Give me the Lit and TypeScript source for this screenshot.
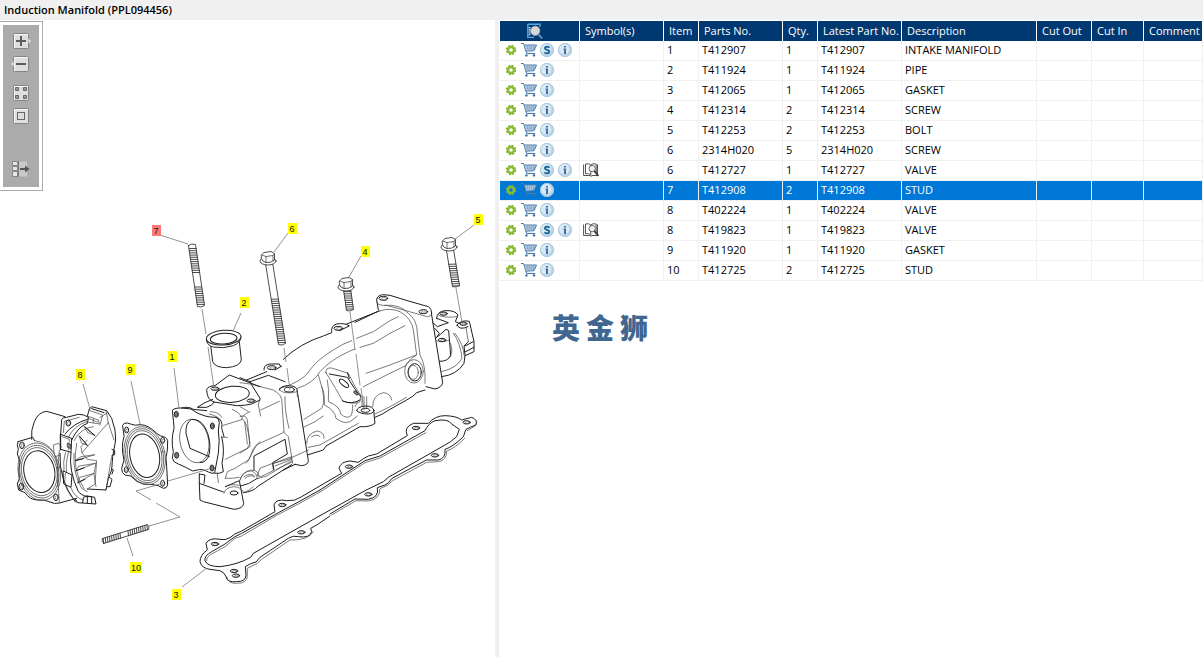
import { LitElement, html, css, svg, nothing } from "lit";
import { customElement, property, state } from "lit/decorators.js";
import { classMap } from "lit/directives/class-map.js";

interface Part {
  item: string;
  no: string;
  qty: number;
  desc: string;
  service?: boolean;
  symbol?: boolean;
}

const PARTS: Part[] = [
  { item: "1", no: "T412907", qty: 1, desc: "INTAKE MANIFOLD", service: true },
  { item: "2", no: "T411924", qty: 1, desc: "PIPE" },
  { item: "3", no: "T412065", qty: 1, desc: "GASKET" },
  { item: "4", no: "T412314", qty: 2, desc: "SCREW" },
  { item: "5", no: "T412253", qty: 2, desc: "BOLT" },
  { item: "6", no: "2314H020", qty: 5, desc: "SCREW" },
  { item: "6", no: "T412727", qty: 1, desc: "VALVE", service: true, symbol: true },
  { item: "7", no: "T412908", qty: 2, desc: "STUD" },
  { item: "8", no: "T402224", qty: 1, desc: "VALVE" },
  { item: "8", no: "T419823", qty: 1, desc: "VALVE", service: true, symbol: true },
  { item: "9", no: "T411920", qty: 1, desc: "GASKET" },
  { item: "10", no: "T412725", qty: 2, desc: "STUD" },
];

const gear = html`<svg viewBox="0 0 16 16" width="16" height="16">
  <circle cx="8" cy="8" r="4.2" fill="none" stroke="#7fb131" stroke-width="2" stroke-dasharray="1.9 1.4" />
  <circle cx="8" cy="8" r="3" fill="none" stroke="#8abb33" stroke-width="2.4" />
</svg>`;

const cart = html`<svg viewBox="0 0 16 16" width="16" height="16" fill="none">
  <path d="M3.6 3H15.4L12.8 8.6L5.4 9Z" fill="#c9dbec" />
  <path d="M6.3 3.5L7 8.5M8.6 3.5V8.5M10.9 3.5L10.6 8.5M13 3.5L12 8.5M4.2 5H14.6M4.8 6.8H13.8" stroke="#6f98c2" stroke-width="0.6" />
  <path d="M0 1.5H2.6L5.6 11.5M3.4 3H15.6L13 8.7L5 9.2" stroke="#4b7cab" />
  <path d="M5.6 11.5H14.2" stroke="#4b7cab" stroke-width="1.2" />
  <circle cx="5.4" cy="13.4" r="1.2" fill="#3f70a2" /><circle cx="13" cy="13.4" r="1.2" fill="#3f70a2" />
</svg>`;

const disc = svg`<circle cx="8" cy="8" r="7" fill="#b9d3e6" /><circle cx="7.2" cy="7" r="5.2" fill="#d9e8f3" />
  <circle cx="8" cy="8" r="6.6" fill="none" stroke="#a9c7de" stroke-width="0.8" />`;

const service = html`<svg viewBox="0 0 16 16" width="16" height="16">${disc}
  <path d="M10.6 5.6Q9.4 4.7 8 4.7Q5.8 4.8 5.9 6.2Q6 7.4 8 7.9Q10.3 8.5 10.2 9.8Q10 11.3 8 11.3Q6.4 11.3 5.4 10.4" fill="none" stroke="#0f6695" stroke-width="1.8" />
</svg>`;

const info = html`<svg viewBox="0 0 16 16" width="16" height="16">${disc}
  <path d="M7 4H9V5.6H7ZM6.4 6.6H9V12H7V7.6H6.4Z" fill="#3e6fa6" />
</svg>`;

const book = html`<svg viewBox="0 0 16 16" width="16" height="16" fill="none" stroke="#56524c">
  <path d="M0.6 2.5V13.5H7L8 14.4L9 13.5H14.5V2.5M2.5 2V11.8Q6 10.8 7.8 13V3Q5.6 1 2.5 2ZM7.8 3Q9.6 1 13.2 2V11" />
  <circle cx="9.2" cy="6.6" r="3.2" fill="#eeeeec" stroke="#666" /><path d="M11.4 9L15.4 14" stroke="#3f3b37" stroke-width="2" />
</svg>`;

const searchDoc = html`<svg viewBox="0 0 16 16" width="16" height="16" fill="none">
  <path d="M0.8 1.2H13V4M0.8 1V14.4H7" stroke="#5aa7de" stroke-width="1.4" />
  <path d="M2.6 4V13" stroke="#fff" stroke-width="1.6" stroke-dasharray="1.2 1" />
  <circle cx="8.2" cy="7.8" r="4.6" fill="#d6d9da" stroke="#a7adb2" /><path d="M11.4 11.4L15.2 15.4" stroke="#5289b8" stroke-width="2.2" />
</svg>`;

const plate = svg`<rect x="1.5" y="1.5" width="15" height="15" rx="1" fill="#dedede" stroke="#858585" />
  <path d="M2.5 16V2.5H16" fill="none" stroke="#f7f7f7" />`;

const TOOLS = [
  { label: "Zoom in", gap: "", art: svg`${plate}<path d="M16.5 6.5L19 9L16.5 11.5Z" fill="#e8e8e8" /><path d="M4 9H14M9 4V14" stroke="#5c5c5c" stroke-width="2" />` },
  { label: "Zoom out", gap: "", art: svg`${plate}<path d="M1.5 6.5L-1 9L1.5 11.5Z" fill="#e8e8e8" /><path d="M4 9H14" stroke="#5c5c5c" stroke-width="2" />` },
  { label: "Tile", gap: "gap-s", art: svg`${plate}<path d="M3.5 3.5h3v3h-3zM11.5 3.5h3v3h-3zM3.5 11.5h3v3h-3zM11.5 11.5h3v3h-3z" fill="#999" stroke="#666" />` },
  { label: "Fit", gap: "", art: svg`${plate}<rect x="5.5" y="5.5" width="7" height="7" fill="#ddd" stroke="#666" />` },
  { label: "Toggle list", gap: "gap-l", art: svg`<path d="M6 1.5H15V16.5H6Z" fill="#c9c9c9" /><path d="M0.5 1.5h5v4h-5zM0.5 6.5h5v4h-5zM0.5 11.5h5v5h-5z" fill="#e6e6e6" stroke="#858585" /><path d="M6.5 1V17" stroke="#777" /><path d="M8 9H14" stroke="#555" stroke-width="2" /><path d="M13 5.5L17.5 9L13 12.5Z" fill="#555" />` },
];

const CALLOUTS = [
  { n: "1", x: 172, y: 357 },
  { n: "2", x: 244, y: 303 },
  { n: "3", x: 176, y: 595 },
  { n: "4", x: 365, y: 252 },
  { n: "5", x: 478, y: 220 },
  { n: "6", x: 292, y: 229 },
  { n: "7", x: 156, y: 231 },
  { n: "8", x: 80, y: 375 },
  { n: "9", x: 130, y: 370 },
  { n: "10", x: 136, y: 568 },
];

const LEADERS =
  "M160 235L188 244M241 313L233 331M182 587L207 568M361 256L349 277M474 225L455 239M288 233L274 252M83 384L90 409M174 368L179 408M131 381L140 424M133 556L127 538" +
  "M202 309L206 334M208 347L214 388M284 348L286 362M287 368L290 390M350 312L355 350M356 354L360 385M361 388L364 410M456 288L462 322" +
  "M209 469L168 481M160 484L136 491L151 500M156 503L180 517L149 526";

/* Shank between two points; each pair in `bands` is a threaded stretch, as fractions of its length. */
function shank(x1: number, y1: number, x2: number, y2: number, w: number, bands: number[][]) {
  const len = Math.hypot(x2 - x1, y2 - y1);
  const ux = (x2 - x1) / len, uy = (y2 - y1) / len;
  const nx = (-uy * w) / 2, ny = (ux * w) / 2;
  const f = (v: number) => v.toFixed(1);
  let hatch = "";
  for (const [a, b] of bands) {
    for (let t = a * len; t < b * len; t += 2.2) {
      const cx = x1 + ux * t, cy = y1 + uy * t;
      hatch += `M${f(cx + nx)} ${f(cy + ny)}L${f(cx - nx + ux)} ${f(cy - ny + uy)}`;
    }
  }
  return svg`<path class="solid" d="M${f(x1 + nx)} ${f(y1 + ny)}L${f(x2 + nx)} ${f(y2 + ny)}Q${f(x2 + ux * 2)} ${f(y2 + uy * 2)} ${f(x2 - nx)} ${f(y2 - ny)}L${f(x1 - nx)} ${f(y1 - ny)}Q${f(x1 - ux * 2)} ${f(y1 - uy * 2)} ${f(x1 + nx)} ${f(y1 + ny)}Z" />
    <path class="hatch" d=${hatch} />`;
}

function head(x: number, y: number) {
  return svg`<g transform="translate(${x} ${y})">
    <ellipse class="solid" cx="0" cy="3" rx="8" ry="4" />
    <path class="solid" d="M-6.5 -3L-4 -5.5L3 -6.5L6.5 -4.5L6.5 2Q3 5 -2 4.5Q-6 3.5 -6.5 1Z" />
    <path d="M-6.5 -3L-2 -1.5L5 -2.5L6.5 -4.5M-2 -1.5V4.5M5 -2.5V3" /></g>`;
}

function holes(list: number[][], rx: number, ry: number, cls = "") {
  return list.map(([x, y]) => svg`<ellipse class="bold ${cls}" cx=${x} cy=${y} rx=${rx} ry=${ry} /><ellipse class="fine" cx=${x + 2} cy=${y + 1} rx=${rx * 0.6} ry=${ry * 0.6} />`);
}

const throttle = svg`<g transform="translate(0 390) scale(.33333)">
  <path class="bold" d="M95 148Q92 120 103 95Q115 66 140 64L195 80M54 155L98 142L104 152M54 155Q49 162 55 178L52 192L60 215Q54 240 58 265L52 282L56 300L75 308Q88 328 110 330Q135 328 150 336Q162 343 178 339L230 325" />
  <g transform="rotate(-12 118 245)"><ellipse class="bold" cx="118" cy="245" rx="46" ry="63" /><ellipse cx="118" cy="245" rx="53" ry="73" /><ellipse cx="118" cy="245" rx="58" ry="80" /><ellipse cx="118" cy="245" rx="63" ry="87" /></g>
  ${holes([[66, 166], [64, 290], [168, 322]], 7, 10)}
  <path d="M104 152Q140 155 162 188L160 165L175 160L185 172M165 200L178 196M162 188Q180 230 172 290" />
  <path class="bold" d="M182 133L185 88Q188 82 200 82L235 73Q250 72 266 82L262 98M182 133V180" />
  <path d="M190 128L193 94L238 82M178 180L172 245L178 339" />
  ${holes([[205, 99]], 7, 9)}
  <path class="bold" d="M268 58L275 50L320 62L335 85L345 120L347 150L338 200L335 240L325 265L318 300L262 297M268 58L262 78M275 56L312 68" />
  <path d="M262 78L295 90L298 102L262 96M262 84L292 96M300 82L323 68M270 62L308 75L300 105M280 86V98" />
  <path class="bold" d="M226 336Q176 270 180 190M182 133L215 145L213 187L182 178ZM190 243L216 255L213 292L192 282Z" />
  <path class="bold" d="M195 132Q220 100 262 88M215 150Q235 108 262 100M213 187Q205 240 235 305Q250 322 275 320" />
  <path d="M205 142Q222 106 262 94M205 188Q196 225 200 245M212 292Q225 325 250 330M222 152Q242 114 280 110M222 190Q218 250 245 295L262 305M230 160Q214 240 252 296M196 188Q188 215 192 243M195 284Q208 318 230 336M186 140L208 148L206 180M196 250L194 280" />
  <path class="bold" d="M225 325L232 338L288 342L284 322L262 318L250 322L248 338M262 318V338M275 322V340" />
  <path d="M252 108L285 137L264 128ZM238 138L262 166L246 160ZM226 212L285 194L244 200ZM228 242L286 220L238 228ZM234 278L282 250L240 262Z" />
  <path class="bold" d="M256 112L285 137M240 140L262 166M226 212L250 206M228 242L252 234M234 278L255 268" />
  <path d="M325 98L246 188L262 208L290 212L285 282L262 297M325 98L342 150M246 188L243 170L262 150M318 300L335 200M318 62L325 98M288 218L282 252L288 290" />
  <path class="bold" d="M336 178L344 182V194L336 196M334 236L340 240L336 252M328 262L336 268L330 290L322 290" />
  <path class="dark" d="M203 160L213 164V176L203 172Z" />
</g>`;

const flanges = svg`<g transform="translate(110 340) scale(.33333)">
  <path class="bold" d="M38 255Q40 248 52 249L65 253Q75 258 90 254Q115 254 140 280L152 288Q170 290 173 302L172 330Q165 350 170 380L173 435Q170 446 160 445L145 437Q125 432 100 432Q80 428 62 408L45 405Q34 400 35 385L42 360Q32 320 42 290Z" />
  <g transform="rotate(-12 104 347)"><ellipse class="bold" cx="104" cy="347" rx="44" ry="66" /><ellipse cx="104" cy="347" rx="51" ry="76" /><ellipse cx="104" cy="347" rx="56" ry="82" /><ellipse cx="104" cy="347" rx="61" ry="88" /></g>
  ${holes([[50, 270], [158, 301], [49, 389], [158, 430]], 6, 9)}
  <path class="bold" d="M188 210Q195 203 215 204L243 207Q262 222 285 228Q300 232 318 232Q328 236 328 248L325 270Q330 300 325 340L314 398Q308 403 295 396Q275 385 262 390L248 393Q225 380 205 372Q190 368 187 355L190 335Q182 300 192 265Z" />
  <path class="bold" d="M215 204Q235 198 250 208L290 212M318 232Q341 240 335 265L342 290M335 290Q345 330 336 370L340 395Q330 402 314 400" />
  <ellipse cx="253" cy="303" rx="43" ry="66" transform="rotate(-12 253 303)" />
  <path class="bold" d="M245 238Q270 236 285 262Q305 300 298 340Q292 368 270 368M242 240Q226 250 228 280L240 325L298 350" />
  ${holes([[199, 223], [307, 258], [200, 346], [306, 384]], 6, 9, "dark")}
  <path class="bold" d="M312 186Q290 180 290 148Q295 138 315 137L358 105L450 140M308 178L285 188L262 202L290 202Q310 195 312 186L380 197Q405 197 425 192L450 180" />
  <ellipse class="bold" cx="367" cy="163" rx="51" ry="24" transform="rotate(-5 367 163)" />
  ${holes([[315, 146], [423, 182]], 12, 5)}
  <path d="M300 215Q328 215 335 232M298 222Q325 228 333 242M367 208Q385 215 395 230M420 215Q395 225 395 238M340 256L398 238Q412 245 420 310L412 325L346 358M404 245L412 312M335 292L352 292M346 415L352 395L375 385L415 360Q440 310 450 305M322 400L325 428M346 415Q366 416 388 412" />
  <path class="bold" d="M268 402V432L270 480L280 485L372 508Q400 506 401 490L388 422L346 440M268 402L285 405L282 430M268 430L340 456" />
  <path d="M342 460Q345 442 372 440Q396 442 400 458Q420 452 430 440M346 440Q360 430 388 436M388 425Q395 395 425 390Q447 392 447 408M402 410Q425 395 435 410" />
  <ellipse class="bold" cx="372" cy="459" rx="12" ry="6" />
</g>`;

const pipe = svg`<g transform="translate(180 215) scale(.33333)">
  <path class="solid bold" d="M92 390L98 440Q105 458 140 458Q180 455 184 435L178 380Z" />
  <path class="solid bold" d="M79 373Q80 392 100 396Q130 402 160 392Q183 382 183 366" />
  <ellipse class="solid bold" cx="131" cy="368" rx="52" ry="22" transform="rotate(-4 131 368)" />
  <ellipse class="bold" cx="131" cy="371" rx="40" ry="16" transform="rotate(-4 131 371)" />
</g>`;

const manifold = svg`<g transform="translate(240 290) scale(.33333)">
  <path class="bold" d="M20 270L80 245M105 240L125 228M130 208Q180 160 250 138L275 128M345 97L412 65M72 240Q70 225 90 222L118 222L122 230M275 125Q272 108 290 102Q315 98 328 108L298 122" />
  ${holes([[95, 233], [295, 115]], 13, 6)}
  <path d="M118 296Q190 275 210 240Q230 210 280 180Q310 160 335 152M350 145L400 125L450 92L475 80M172 295Q220 280 240 245Q270 210 330 183L345 177M360 172L400 160L450 130L495 107M378 250L450 225L528 195M370 290L450 250L495 228" />
  <path class="bold" d="M0 263L30 275L85 256L135 275M30 275L37 288L60 325" />
  <path d="M0 278L30 282L100 300Q128 315 126 340L132 425M60 325L55 345L62 378M62 360L118 334M0 350L24 364M0 380Q18 372 22 390L30 470L0 490" />
  <path class="bold" d="M118 300Q120 287 148 287Q172 288 172 305L205 512Q205 525 185 527L165 523" />
  <path d="M118 300Q135 315 172 305M135 320Q133 360 147 415M130 425L145 440L158 520M172 300L172 320M130 428L50 464L38 480Q30 510 18 520" />
  <ellipse class="bold" cx="148" cy="299" rx="15" ry="7" />
  <path class="bold" d="M42 540V498L135 448L142 492L98 518L102 540M130 540L165 523" />
  <path d="M100 520L155 500M105 528L155 508M110 538L158 515" />
  <path d="M192 388L245 355Q255 340 248 300L235 255M190 412L225 395L250 378M200 460Q200 430 232 423Q255 428 252 445M215 440Q235 430 240 440M205 472L240 465L355 400M150 505L205 480" />
  <path class="bold" d="M205 494L250 480L258 468L360 410Q390 412 405 400L401 360M405 382Q425 375 450 358L500 330Q520 320 530 308L555 300" />
  <path d="M405 372L450 350L500 322" />
  <path d="M258 248Q255 232 275 234L325 250L345 290L362 315L360 335Q340 345 308 333Q290 300 258 248ZM245 290Q255 310 253 345Q285 360 288 385Q320 410 342 386L352 378M262 270Q268 300 265 335Q300 348 302 372Q320 388 332 378Q338 370 338 345M345 350L352 338" />
  <path class="bold" d="M268 252L322 262Q345 300 362 320M322 248L328 265M308 333Q335 345 360 330" />
  <ellipse class="bold" cx="312" cy="280" rx="7" ry="17" transform="rotate(-50 312 280)" />
  <ellipse class="dark" cx="348" cy="309" rx="4" ry="8" transform="rotate(-50 348 309)" />
  <path d="M398 350Q398 315 430 308Q452 310 455 330M372 320V355M380 320V355M366 318V350" />
  <path class="bold" d="M350 362Q352 350 375 348Q400 348 402 362M350 362Q360 372 385 372Q400 370 402 362" />
  <ellipse class="bold" cx="376" cy="361" rx="13" ry="6" />
</g>`;

const rearEnd = svg`<g transform="translate(340 200) scale(.33333)">
  <path class="bold" d="M115 330L110 300Q110 287 128 284L150 286Q200 302 265 320Q275 325 275 345L308 548Q305 563 285 567L258 560M118 333L20 372" />
  <path d="M110 308Q118 318 140 316L262 350Q274 350 275 342M118 333Q150 322 180 335Q215 355 220 390L230 465Q205 480 195 500M135 316Q180 312 205 340Q232 360 232 400L240 465Q258 495 255 550" />
  ${holes([[130, 295], [250, 335]], 13, 6)}
  <ellipse cx="222" cy="514" rx="28" ry="35" /><ellipse class="bold" cx="224" cy="517" rx="20" ry="26" /><ellipse cx="220" cy="517" rx="15" ry="21" />
  <path class="bold" d="M290 355Q290 335 315 332Q345 330 354 345L346 365L362 372M290 355L325 368L292 380L278 368M350 376Q365 358 388 364L402 425V455L375 467L372 490Q350 525 305 530M284 385L298 400L290 412M290 412Q300 405 318 388L326 392L332 465Q325 485 298 484" />
  <path class="bold" d="M375 438L400 425M375 456L402 442M375 467L372 438L385 425M352 376Q358 392 384 380" />
  <path d="M290 422Q305 430 328 420M340 400Q362 430 366 475Q350 505 304 515M345 400Q372 435 372 465M378 382L385 425M295 345Q310 355 350 350M332 430Q340 450 332 470" />
  ${holes([[311, 341], [370, 371], [306, 420]], 11, 5)}
</g>`;

const lowerEdge = svg`<g transform="translate(170 400) scale(.33333)">
  <path class="bold" d="M220 278Q250 275 265 258L365 194M212 258Q235 255 262 235" />
  <path d="M210 240Q220 210 245 213Q260 220 262 235M262 225L270 205L308 190L310 212L272 230ZM310 190L365 175M262 236L290 228L365 182M225 235Q240 222 252 230" />
</g>`;

const gasketOuterA =
  "M480 240L395 290Q375 305 350 302Q318 295 312 315L315 335L215 393Q190 402 180 413Q165 422 150 418Q118 412 108 430L112 450Q90 465 90 485Q95 505 120 508L150 512Q165 518 168 530Q170 548 200 545Q228 545 228 525L226 500Q240 490 258 486L270 472L355 415Q370 405 385 410Q420 415 425 395L422 385Q442 375 455 365L480 348";
const gasketOuterB =
  "M30 270L65 250L57 235Q62 215 90 213L115 217Q130 205 145 198L170 192L262 137Q250 112 280 100L325 100Q345 77 375 77Q410 78 425 90L455 82Q475 90 467 105Q450 112 438 118L430 140Q400 170 375 178Q378 205 355 210L320 210Q270 235 215 266Q205 282 195 285L172 293Q178 322 145 328L105 327L30 372";
const gasket = svg`<g transform="translate(170 400) scale(.33333)">
    <path class="bold" d=${gasketOuterA} />
    <path class="bold" d="M450 270L385 306L325 338L215 400L195 410Q180 420 165 432L125 455Q102 468 105 482Q112 500 150 500Q200 495 242 472L250 460L450 347" />
    <path d="M450 276L385 312L320 346L215 408L195 415L165 440L125 462Q108 472 110 482M170 530Q175 552 200 550Q232 550 232 528V505L262 490L275 478L360 420Q415 422 430 395" />
    ${holes([[135, 432], [337, 315], [394, 397], [192, 513], [198, 527]], 11, 5)}
  </g>
  <g transform="translate(320 390) scale(.33333)">
    <path class="bold" d=${gasketOuterB} />
    <path class="bold" d="M0 300L135 212L180 198L315 122Q325 100 345 92Q385 85 395 102L418 118L410 140Q390 158 375 165L205 262L190 275L135 302L0 377" />
    <path d="M0 306L135 218L180 204L318 128M434 145Q405 175 380 183Q380 212 355 215L320 217L218 272Q205 288 180 296Q180 328 145 333L108 332L35 375M470 92Q474 106 455 114L442 122" />
    ${holes([[87, 230], [288, 114], [440, 97], [345, 196], [145, 313]], 11, 5)}
  </g>`;

@customElement("parts-drawing")
class PartsDrawing extends LitElement {
  @property() active = "";

  static styles = css`
    :host { display: block; }
    .sheet { display: block; width: 100%; height: auto; }
    .lines { fill: none; stroke: #4a4a4a; stroke-width: 2.2; stroke-linejoin: round; stroke-linecap: round; }
    .page { stroke-width: 0.8; }
    .bold { stroke: #1c1c1c; stroke-width: 3; }
    .solid { fill: #fff; stroke: #222; }
    .fine { stroke-width: 1.6; }
    .hatch { stroke: #333; stroke-width: 0.9; }
    .dark { fill: #888; stroke: #222; }
    .leader { fill: none; stroke: #777; stroke-width: 0.8; }
    .tag { fill: #ff0; }
    .tag.on { fill: #f77; }
    .num { font: 9px "Liberation Sans", Arial, sans-serif; fill: #111; text-anchor: middle; }
  `;

  render() {
    return html`<svg class="sheet" viewBox="0 20 495 637" role="img" aria-label="Exploded view">
      <g class="lines">${lowerEdge}${manifold}${rearEnd}${flanges}${throttle}${gasket}${pipe}
        <g class="page">
          ${shank(192, 245, 201, 306, 7, [[0.05, 0.46], [0.68, 1]])}
          ${shank(269, 263, 282, 344, 7, [[0.44, 1]])}${head(268, 258)}
          ${shank(347, 289, 350, 310, 7, [[0.1, 1]])}${head(346, 284)}
          ${shank(450, 250, 456, 286, 7, [[0.38, 1]])}${head(449, 244)}
          ${shank(103, 541, 148, 527, 5, [[0, 0.42], [0.55, 1]])}
        </g>
      </g>
      <path class="leader" d=${LEADERS} />
      ${CALLOUTS.map((c) => {
        const w = c.n.length > 1 ? 12 : 9;
        return svg`<rect class=${classMap({ tag: true, on: c.n === this.active })} x=${c.x - Math.floor(w / 2)} y=${c.y - 6} width=${w} height="11" />
          <text class="num" x=${c.x} y=${c.y + 3}>${c.n}</text>`;
      })}
    </svg>`;
  }
}

@customElement("app-root")
class AppRoot extends LitElement {
  @state() private selected = 7;

  static styles = css`
    :host { display: flex; flex-direction: column; min-height: 100vh; background: #fff; color: #000; font: 11px/20px "Open Sans", "Noto Sans", sans-serif; }
    .title { margin: 0; padding: 0 4px; background: #f0f0f0; font-size: 11px; font-weight: 600; }
    .panes { flex: 1; display: grid; grid-template-columns: minmax(0, 495fr) 4px minmax(0, 704fr); }
    .view { position: relative; }
    .split { background: #f0f0f0; }
    .tools { position: absolute; top: 1px; left: 0; padding: 3px; background: #fff; border: 1px solid #ababab; border-left: 0; }
    .bar { display: flex; flex-direction: column; align-items: center; gap: 5px; width: 36px; padding: 7px 0 9px; background: #ababab; }
    .tool, .act { display: block; padding: 0; border: 0; background: none; cursor: pointer; }
    .tool svg, .act svg { display: block; overflow: visible; }
    .gap-s { margin-top: 6px; }
    .gap-l { margin-top: 30px; }
    .list { padding: 1px 0 0 1px; overflow: hidden; }
    .grid { width: 100%; table-layout: fixed; border-collapse: separate; border-spacing: 0; }
    .grid th { height: 20px; padding: 0 0 0 5px; background: #003971; color: #fff; border-right: 1px solid #fff; font-weight: 400; text-align: left; white-space: nowrap; }
    .grid .lead { padding: 0 10px 0 0; }
    .lead svg { display: block; margin: 0 auto; }
    .grid td { padding: 0 0 2px 3px; border-right: 1px solid #f0f0f0; border-bottom: 1px solid #f0f0f0; line-height: 17px; height: 17px; white-space: nowrap; }
    .grid .on td { background: #0078d7; color: #fff; }
    .acts { display: flex; gap: 2px; }
    .sym svg { display: block; }
    .c80 { width: 80px; } .c84 { width: 84px; } .c35 { width: 35px; } .c135 { width: 135px; } .c55 { width: 55px; } .c52 { width: 52px; }
    .mark { display: flex; gap: 6px; margin: 26px 0 0 52px; color: #41668f; font: 900 28px/40px "Noto Sans CJK SC", sans-serif; }
  `;

  private row(p: Part, i: number) {
    return html`<tr class=${classMap({ on: i === this.selected })} @click=${() => (this.selected = i)}>
      <td><div class="acts">
        <button class="act" aria-label="Options">${gear}</button>
        <button class="act" aria-label="Add to cart">${cart}</button>
        ${p.service ? html`<button class="act" aria-label="Service">${service}</button>` : nothing}
        <button class="act" aria-label="Information">${info}</button>
      </div></td>
      <td class="sym">${p.symbol ? book : nothing}</td>
      <td>${p.item}</td><td>${p.no}</td><td>${p.qty}</td><td>${p.no}</td><td>${p.desc}</td>
      <td></td><td></td><td></td>
    </tr>`;
  }

  render() {
    return html`
      <h1 class="title">Induction Manifold (PPL094456)</h1>
      <div class="panes">
        <section class="view">
          <parts-drawing .active=${PARTS[this.selected].item}></parts-drawing>
          <div class="tools"><div class="bar">
            ${TOOLS.map((t) => html`<button class="tool ${t.gap}" aria-label=${t.label}><svg viewBox="0 0 18 18" width="18" height="18">${t.art}</svg></button>`)}
          </div></div>
        </section>
        <div class="split"></div>
        <section class="list">
          <table class="grid">
            <colgroup>
              <col class="c80" /><col class="c84" /><col class="c35" /><col class="c84" /><col class="c35" />
              <col class="c84" /><col class="c135" /><col class="c55" /><col class="c52" /><col />
            </colgroup>
            <thead><tr>
              <th class="lead" aria-label="Search">${searchDoc}</th>
              <th>Symbol(s)</th><th>Item</th><th>Parts No.</th><th>Qty.</th><th>Latest Part No.</th>
              <th>Description</th><th>Cut Out</th><th>Cut In</th><th>Comment</th>
            </tr></thead>
            <tbody>${PARTS.map((p, i) => this.row(p, i))}</tbody>
          </table>
          <div class="mark"><span>英</span><span>金</span><span>狮</span></div>
        </section>
      </div>`;
  }
}
